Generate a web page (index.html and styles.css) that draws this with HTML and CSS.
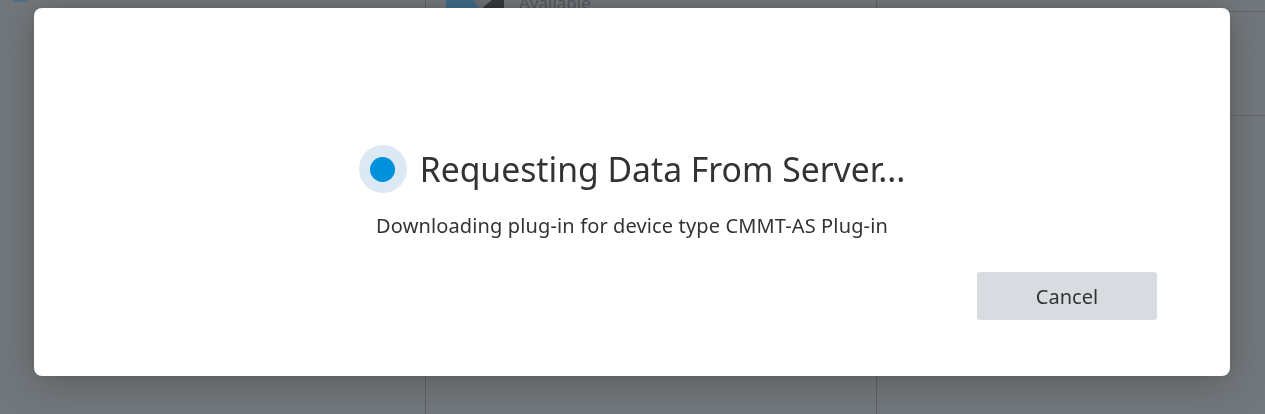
FILE: index.html
```html
<!DOCTYPE html>
<html lang="en">
<head>
<meta charset="utf-8">
<title>Requesting Data From Server</title>
<link rel="stylesheet" href="styles.css">
</head>
<body>
<div class="app">
  <div class="col col-left">
    <div class="left-mark"></div>
  </div>
  <div class="col col-mid">
    <div class="device">
      <svg class="device-img" width="58" height="10" viewBox="0 0 58 10">
        <polygon points="0,0 28,0 34,10 0,10" fill="#3f6a88"/>
        <polygon points="28,0 34,10 46,0" fill="#6d7175"/>
        <polygon points="40,5 46,0 58,0 58,10 34,10" fill="#35393c"/>
      </svg>
      <span class="device-text">Available</span>
    </div>
  </div>
  <div class="col col-right">
    <div class="right-row"></div>
    <div class="right-row second"></div>
  </div>
</div>

<div class="overlay">
  <div class="dialog">
    <div class="title-row">
      <div class="spinner"><div class="spinner-dot"></div></div>
      <h1 class="title">Requesting Data From Server...</h1>
    </div>
    <p class="subtitle">Downloading plug-in for device type CMMT-AS Plug-in</p>
    <div class="actions">
      <button class="btn-cancel">Cancel</button>
    </div>
  </div>
</div>
</body>
</html>
```

FILE: styles.css
```css
* { box-sizing: border-box; }

html, body {
  margin: 0;
  padding: 0;
  width: 1265px;
  height: 414px;
  overflow: hidden;
}

body {
  background: #72777b;
  font-family: "Noto Sans", "Open Sans", sans-serif;
  color: #333;
}

.app {
  display: grid;
  grid-template-columns: 426px 451px 1fr;
  height: 414px;
}

.col {
  height: 100%;
}

.col-left {
  border-right: 1px solid #5d6165;
}

.left-mark {
  margin-left: 13px;
  width: 14px;
  height: 2px;
  background: #4e6f88;
}

.col-mid {
  border-right: 1px solid #5d6165;
}

.device {
  display: flex;
  align-items: flex-start;
  gap: 15px;
  padding-left: 20px;
  height: 12px;
  overflow: hidden;
}

.device-img { display: block; }

.device-text {
  font-size: 17px;
  line-height: 17px;
  color: #54585c;
  margin-top: -6px;
}

.right-row {
  height: 12px;
  border-bottom: 1px solid #63676b;
}

.right-row.second {
  height: 104px;
}

.overlay {
  position: fixed;
  inset: 0;
  padding: 8px 35px 38px 34px;
  display: flex;
}

.dialog {
  flex: 1;
  background: #fff;
  border-radius: 8px;
  box-shadow: 0 6px 40px rgba(0, 0, 0, 0.22), 0 0 12px rgba(0, 0, 0, 0.08);
  display: flex;
  flex-direction: column;
  align-items: center;
  padding: 137px 73px 56px;
}

.title-row {
  display: flex;
  align-items: center;
  gap: 13px;
  height: 48px;
}

.spinner {
  width: 48px;
  height: 48px;
  border-radius: 50%;
  background: #dce9f5;
  display: flex;
  align-items: center;
  justify-content: center;
}

.spinner-dot {
  width: 25px;
  height: 25px;
  border-radius: 50%;
  background: #0091dd;
}

.title {
  margin: 0;
  font-size: 33.7px;
  font-weight: 400;
  line-height: 48px;
  color: #333;
  letter-spacing: 0;
}

.subtitle {
  margin: 20px 0 0;
  font-size: 20px;
  line-height: 26px;
  letter-spacing: 0.13px;
  color: #333;
}

.actions {
  margin-top: 33px;
  align-self: stretch;
  display: flex;
  justify-content: flex-end;
}

.btn-cancel {
  width: 180px;
  height: 48px;
  border: none;
  border-radius: 3px;
  background: #d8dbe0;
  font-family: "Noto Sans", "Open Sans", sans-serif;
  font-size: 20px;
  color: #333;
  cursor: pointer;
}
```
